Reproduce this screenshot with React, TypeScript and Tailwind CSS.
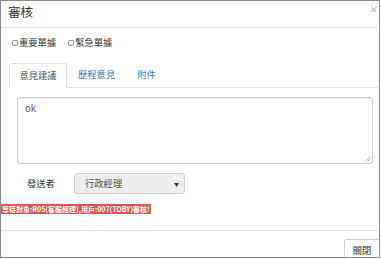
import React from 'react';

const font = { fontFamily: '"Noto Sans CJK TC", "Liberation Sans", sans-serif' };

const Check: React.FC<{ label: string }> = ({ label }) => (
  <label className="flex items-center">
    <span className="w-[6px] h-[6px] border border-[#999] rounded-[1px] bg-gradient-to-b from-white to-[#ddd] mr-[1px]"></span>
    <span className="text-[9.3px] text-[#333] leading-none">{label}</span>
  </label>
);

const App: React.FC = () => {
  return (
    <div className="w-[381px] h-[259px] bg-white overflow-hidden" style={font}>
      <div className="w-[380px] h-[258px] border border-[#8a8a8a] flex flex-col overflow-hidden">
        {/* header */}
        <div className="h-[27px] shrink-0 border-b border-[#e5e5e5] flex items-center justify-between pl-[7px] pr-[1px]">
          <h4 className="text-[12.5px] text-[#333] leading-none -mt-[4px]">審核</h4>
          <span className="text-[9px] font-bold text-[#bbb] leading-none -mt-[9px]">✕</span>
        </div>

        {/* body */}
        <div className="flex flex-col flex-1">
          <div className="flex items-center gap-[12px] pl-[11px] mt-[9px] h-[12px]">
            <Check label="重要單據" />
            <Check label="緊急單據" />
          </div>

          <div className="mt-[14px] ml-[8px] mr-[1px] flex border-b border-[#ddd] h-[25px]">
            <div className="w-[58px] h-[25px] border border-[#ddd] border-b-white rounded-t-[3px] bg-white flex items-center justify-center text-[9.3px] text-[#555]">
              意見建議
            </div>
            <div className="ml-[11px] flex items-center text-[9.3px] text-[#337ab7]">歷程意見</div>
            <div className="ml-[22px] flex items-center text-[9.3px] text-[#337ab7]">附件</div>
          </div>

          <div className="mt-[9px] ml-[16px] w-[356px] h-[67px] border border-[#ccc] rounded-[3px] relative shadow-[inset_0_1px_1px_rgba(0,0,0,0.06)]">
            <div className="pl-[7px] pt-[4px] text-[9.3px] text-[#555]">ok</div>
            <svg className="absolute right-[1px] bottom-[1px]" width="6" height="6" viewBox="0 0 6 6">
              <path d="M5 1L1 5M5 3L3 5" stroke="#aaa" strokeWidth="0.8" />
            </svg>
          </div>

          <div className="mt-[9px] flex items-center h-[21px]">
            <span className="ml-[26px] w-[47px] text-[9.3px] text-[#333]">發送者</span>
            <div className="w-[111px] h-[21px] bg-[#eee] border border-[#ccc] rounded-[3px] flex items-center justify-between pl-[10px] pr-[5px]">
              <span className="text-[9.3px] text-[#555]">行政經理</span>
              <span className="text-[5px] text-[#333]">▼</span>
            </div>
          </div>

          <div className="mt-[10px] self-start bg-[#d9534f] text-white font-bold text-[7px] leading-[10px] h-[10px] pl-[1px] pr-[1px] rounded-r-[1px] whitespace-nowrap">
            等待對象:R05(客服經理),用戶:007(TOBY)審核!
          </div>
        </div>

        {/* footer */}
        <div className="h-[27px] shrink-0 border-t border-[#e5e5e5] flex justify-end items-start pt-[8px]">
          <button className="w-[36px] h-[24px] border border-[#ccc] rounded-[3px] bg-white text-[9.3px] text-[#333] -mr-[1px]">
            關閉
          </button>
        </div>
      </div>
    </div>
  );
};

export default App;
